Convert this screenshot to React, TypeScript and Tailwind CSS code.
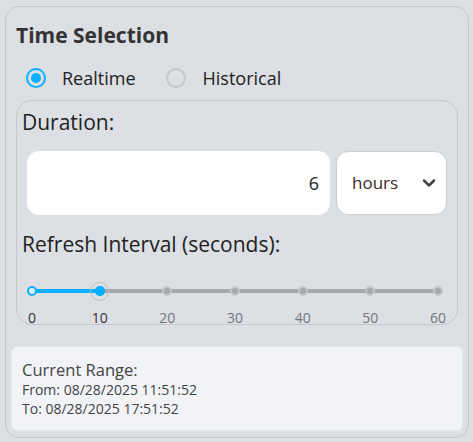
import { ChevronDown } from 'lucide-react';

const marks = [0, 10, 20, 30, 40, 50, 60];

export default function App() {
    const value = 10;
    return (
        <div className="w-[473px] h-[442px] bg-[#dcdfe4] pl-[5px] pr-[4px] pt-[6px] pb-[4px] font-['Open_Sans',sans-serif] text-[#222]">
            <div className="h-full border border-[#c4c7cc] rounded-[14px] flex flex-col">
                {/* Header */}
                <div className="px-[10px] pt-[13px]">
                    <h2 className="text-[21px] leading-[30px] font-bold text-[#333]">Time Selection</h2>

                    <div className="flex items-center h-[36px] mt-[10px] pl-[10px] text-[18px]">
                        <label className="flex items-center">
                            <span className="w-[20px] h-[20px] rounded-full border-2 border-[#0ab0ff] flex items-center justify-center">
                                <span className="w-[10px] h-[10px] rounded-full bg-[#0ab0ff]" />
                            </span>
                            <span className="ml-[16px]">Realtime</span>
                        </label>
                        <label className="flex items-center ml-[30px]">
                            <span className="w-[20px] h-[20px] rounded-full border-2 border-[#c3c6cb]" />
                            <span className="ml-[17px]">Historical</span>
                        </label>
                    </div>

                    {/* Settings box */}
                    <div className="mt-[4px] border border-[#c4c7cc] rounded-[16px] h-[225px] pl-[5px] pr-[10px] pt-[6px]">
                        <div className="text-[21px] leading-[30px]">Duration:</div>
                        <div className="flex gap-[6px] mt-[14px] pl-[5px]">
                            <div className="flex-1 h-[64px] bg-white rounded-[12px] flex items-center justify-end pr-[11px] text-[18px]">6</div>
                            <div className="w-[111px] h-[64px] bg-white rounded-[12px] border border-[#c9ccd1] flex items-center justify-between pl-[15px] pr-[7px] text-[17px] text-[#3a2a2a]">
                                hours
                                <ChevronDown size={20} strokeWidth={3} className="text-[#444]" />
                            </div>
                        </div>
                        <div className="text-[21px] leading-[30px] mt-[14px]">Refresh Interval (seconds):</div>

                        {/* Slider */}
                        <div className="relative ml-[10px] mr-[9px] mt-[30px] h-[4px] bg-[#a5a8ad] rounded-full">
                            <div className="h-full bg-[#0ab0ff] rounded-full" style={{ width: `${(value / 60) * 100}%` }} />
                            {marks.map((m) => (
                                <span
                                    key={m}
                                    className={`absolute top-1/2 w-[10px] h-[10px] -ml-[5px] -mt-[5px] rounded-full border-2 ${m <= value ? 'border-[#0ab0ff] bg-[#dff3ff]' : 'border-[#c2c5ca] bg-[#a5a8ad]'}`}
                                    style={{ left: `${(m / 60) * 100}%` }}
                                />
                            ))}
                            <span
                                className="absolute top-1/2 w-[19px] h-[19px] -ml-[9.5px] -mt-[9.5px] rounded-full border border-[#b9bcc1] flex items-center justify-center"
                                style={{ left: `${(value / 60) * 100}%` }}
                            >
                                <span className="w-[10px] h-[10px] rounded-full bg-[#0ab0ff] border-2 border-[#0ab0ff]" />
                            </span>
                        </div>
                        <div className="relative ml-[10px] mr-[9px] mt-[14px] h-[20px] text-[14px]">
                            {marks.map((m) => (
                                <span
                                    key={m}
                                    className={`absolute -translate-x-1/2 ${m <= value ? 'text-[#333]' : 'text-[#74777d]'}`}
                                    style={{ left: `${(m / 60) * 100}%` }}
                                >
                                    {m}
                                </span>
                            ))}
                        </div>
                    </div>
                </div>

                {/* Current range */}
                <div className="mx-[5px] mt-[21px] h-[85px] bg-[#f1f3f6] rounded-[6px] border border-[#e6e8eb] px-[10px] pt-[13px] text-[#444]">
                    <div className="text-[16.5px] leading-[20px]">Current Range:</div>
                    <div className="text-[14px] leading-[19px]">From: 08/28/2025 11:51:52</div>
                    <div className="text-[14px] leading-[19px]">To: 08/28/2025 17:51:52</div>
                </div>
            </div>
        </div>
    );
}
